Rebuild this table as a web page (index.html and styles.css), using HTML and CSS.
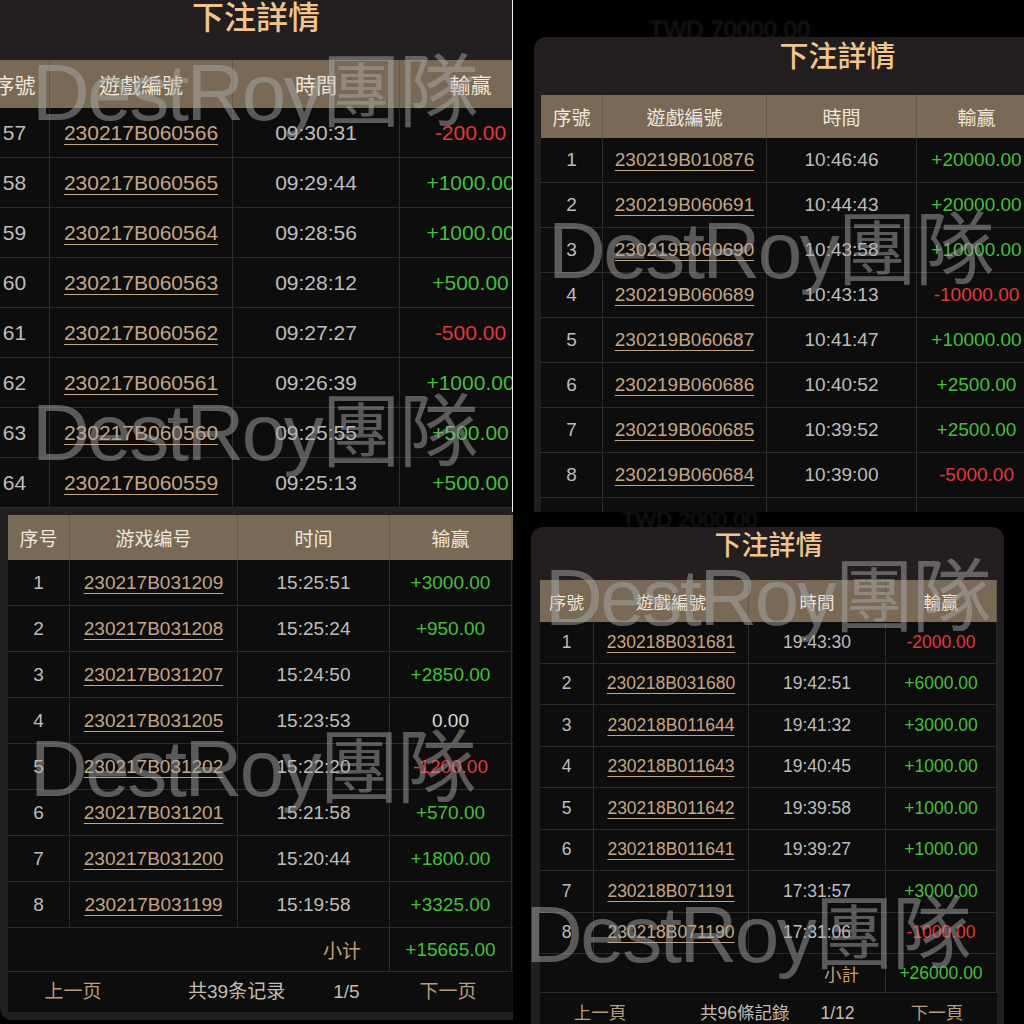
FILE: index.html
```html
<!doctype html>
<html>

<head>
    <meta charset="utf-8">
    <title>下注詳情</title>
    <link rel="stylesheet" href="styles.css">
</head>

<body>
    <div class="collage">

        <!-- 左上 -->
        <div class="shot shot-tl">
            <div class="modal">
                <div class="modal-title">下注詳情</div>
                <div class="bet-table">
                    <div class="bet-row bet-head">
                        <div class="cell">序號</div>
                        <div class="cell">遊戲編號</div>
                        <div class="cell">時間</div>
                        <div class="cell">輸贏</div>
                    </div>
                    <div class="bet-row"><div class="cell">57</div><div class="cell"><a class="game-id" href="#g1">230217B060566</a></div><div class="cell">09:30:31</div><div class="cell lose">-200.00</div></div>
                    <div class="bet-row"><div class="cell">58</div><div class="cell"><a class="game-id" href="#g1">230217B060565</a></div><div class="cell">09:29:44</div><div class="cell win">+1000.00</div></div>
                    <div class="bet-row"><div class="cell">59</div><div class="cell"><a class="game-id" href="#g1">230217B060564</a></div><div class="cell">09:28:56</div><div class="cell win">+1000.00</div></div>
                    <div class="bet-row"><div class="cell">60</div><div class="cell"><a class="game-id" href="#g1">230217B060563</a></div><div class="cell">09:28:12</div><div class="cell win">+500.00</div></div>
                    <div class="bet-row"><div class="cell">61</div><div class="cell"><a class="game-id" href="#g1">230217B060562</a></div><div class="cell">09:27:27</div><div class="cell lose">-500.00</div></div>
                    <div class="bet-row"><div class="cell">62</div><div class="cell"><a class="game-id" href="#g1">230217B060561</a></div><div class="cell">09:26:39</div><div class="cell win">+1000.00</div></div>
                    <div class="bet-row"><div class="cell">63</div><div class="cell"><a class="game-id" href="#g1">230217B060560</a></div><div class="cell">09:25:55</div><div class="cell win">+500.00</div></div>
                    <div class="bet-row"><div class="cell">64</div><div class="cell"><a class="game-id" href="#g1">230217B060559</a></div><div class="cell">09:25:13</div><div class="cell win">+500.00</div></div>
                </div>
            </div>
            <div class="watermark wm-tl1">DestRoy團隊</div>
            <div class="watermark wm-tl2">DestRoy團隊</div>
        </div>

        <!-- 右上 -->
        <div class="shot shot-tr">
            <div class="backdrop"><span class="ghost">TWD 70000.00</span></div>
            <div class="modal">
                <div class="modal-title">下注詳情</div>
                <div class="bet-table">
                    <div class="bet-row bet-head">
                        <div class="cell">序號</div>
                        <div class="cell">遊戲編號</div>
                        <div class="cell">時間</div>
                        <div class="cell">輸贏</div>
                    </div>
                    <div class="bet-row"><div class="cell">1</div><div class="cell"><a class="game-id" href="#g2">230219B010876</a></div><div class="cell">10:46:46</div><div class="cell win">+20000.00</div></div>
                    <div class="bet-row"><div class="cell">2</div><div class="cell"><a class="game-id" href="#g2">230219B060691</a></div><div class="cell">10:44:43</div><div class="cell win">+20000.00</div></div>
                    <div class="bet-row"><div class="cell">3</div><div class="cell"><a class="game-id" href="#g2">230219B060690</a></div><div class="cell">10:43:58</div><div class="cell win">+10000.00</div></div>
                    <div class="bet-row"><div class="cell">4</div><div class="cell"><a class="game-id" href="#g2">230219B060689</a></div><div class="cell">10:43:13</div><div class="cell lose">-10000.00</div></div>
                    <div class="bet-row"><div class="cell">5</div><div class="cell"><a class="game-id" href="#g2">230219B060687</a></div><div class="cell">10:41:47</div><div class="cell win">+10000.00</div></div>
                    <div class="bet-row"><div class="cell">6</div><div class="cell"><a class="game-id" href="#g2">230219B060686</a></div><div class="cell">10:40:52</div><div class="cell win">+2500.00</div></div>
                    <div class="bet-row"><div class="cell">7</div><div class="cell"><a class="game-id" href="#g2">230219B060685</a></div><div class="cell">10:39:52</div><div class="cell win">+2500.00</div></div>
                    <div class="bet-row"><div class="cell">8</div><div class="cell"><a class="game-id" href="#g2">230219B060684</a></div><div class="cell">10:39:00</div><div class="cell lose">-5000.00</div></div>
                    <div class="bet-row"><div class="cell"></div><div class="cell"></div><div class="cell"></div><div class="cell"></div></div>
                </div>
            </div>
            <div class="watermark wm-tr">DestRoy團隊</div>
        </div>

        <!-- 左下 -->
        <div class="shot shot-bl">
            <div class="modal">
                <div class="bet-table">
                    <div class="bet-row bet-head">
                        <div class="cell">序号</div>
                        <div class="cell">游戏编号</div>
                        <div class="cell">时间</div>
                        <div class="cell">输赢</div>
                    </div>
                    <div class="bet-row"><div class="cell">1</div><div class="cell"><a class="game-id" href="#g3">230217B031209</a></div><div class="cell">15:25:51</div><div class="cell win">+3000.00</div></div>
                    <div class="bet-row"><div class="cell">2</div><div class="cell"><a class="game-id" href="#g3">230217B031208</a></div><div class="cell">15:25:24</div><div class="cell win">+950.00</div></div>
                    <div class="bet-row"><div class="cell">3</div><div class="cell"><a class="game-id" href="#g3">230217B031207</a></div><div class="cell">15:24:50</div><div class="cell win">+2850.00</div></div>
                    <div class="bet-row"><div class="cell">4</div><div class="cell"><a class="game-id" href="#g3">230217B031205</a></div><div class="cell">15:23:53</div><div class="cell even">0.00</div></div>
                    <div class="bet-row"><div class="cell">5</div><div class="cell"><a class="game-id" href="#g3">230217B031202</a></div><div class="cell">15:22:20</div><div class="cell lose">-1200.00</div></div>
                    <div class="bet-row"><div class="cell">6</div><div class="cell"><a class="game-id" href="#g3">230217B031201</a></div><div class="cell">15:21:58</div><div class="cell win">+570.00</div></div>
                    <div class="bet-row"><div class="cell">7</div><div class="cell"><a class="game-id" href="#g3">230217B031200</a></div><div class="cell">15:20:44</div><div class="cell win">+1800.00</div></div>
                    <div class="bet-row"><div class="cell">8</div><div class="cell"><a class="game-id" href="#g3">230217B031199</a></div><div class="cell">15:19:58</div><div class="cell win">+3325.00</div></div>
                    <div class="bet-row subtotal"><div class="cell label">小计</div><div class="cell win">+15665.00</div></div>
                    <div class="pager">
                        <span class="pg-side">上一页</span>
                        <span class="pg-info"><span>共39条记录</span><span>1/5</span></span>
                        <span class="pg-side">下一页</span>
                    </div>
                </div>
            </div>
            <div class="watermark wm-bl">DestRoy團隊</div>
        </div>

        <!-- 右下 -->
        <div class="shot shot-br">
            <div class="backdrop"><span class="ghost">TWD 2000.00</span></div>
            <div class="modal">
                <div class="modal-title">下注詳情</div>
                <div class="bet-table">
                    <div class="bet-row bet-head">
                        <div class="cell">序號</div>
                        <div class="cell">遊戲編號</div>
                        <div class="cell">時間</div>
                        <div class="cell">輸贏</div>
                    </div>
                    <div class="bet-row"><div class="cell">1</div><div class="cell"><a class="game-id" href="#g4">230218B031681</a></div><div class="cell">19:43:30</div><div class="cell lose">-2000.00</div></div>
                    <div class="bet-row"><div class="cell">2</div><div class="cell"><a class="game-id" href="#g4">230218B031680</a></div><div class="cell">19:42:51</div><div class="cell win">+6000.00</div></div>
                    <div class="bet-row"><div class="cell">3</div><div class="cell"><a class="game-id" href="#g4">230218B011644</a></div><div class="cell">19:41:32</div><div class="cell win">+3000.00</div></div>
                    <div class="bet-row"><div class="cell">4</div><div class="cell"><a class="game-id" href="#g4">230218B011643</a></div><div class="cell">19:40:45</div><div class="cell win">+1000.00</div></div>
                    <div class="bet-row"><div class="cell">5</div><div class="cell"><a class="game-id" href="#g4">230218B011642</a></div><div class="cell">19:39:58</div><div class="cell win">+1000.00</div></div>
                    <div class="bet-row"><div class="cell">6</div><div class="cell"><a class="game-id" href="#g4">230218B011641</a></div><div class="cell">19:39:27</div><div class="cell win">+1000.00</div></div>
                    <div class="bet-row"><div class="cell">7</div><div class="cell"><a class="game-id" href="#g4">230218B071191</a></div><div class="cell">17:31:57</div><div class="cell win">+3000.00</div></div>
                    <div class="bet-row"><div class="cell">8</div><div class="cell"><a class="game-id" href="#g4">230218B071190</a></div><div class="cell">17:31:06</div><div class="cell lose">-1000.00</div></div>
                    <div class="bet-row subtotal"><div class="cell label">小計</div><div class="cell win">+26000.00</div></div>
                    <div class="pager">
                        <span class="pg-side">上一頁</span>
                        <span class="pg-info"><span>共96條記錄</span><span>1/12</span></span>
                        <span class="pg-side">下一頁</span>
                    </div>
                </div>
            </div>
            <div class="watermark wm-br1">DestRoy團隊</div>
            <div class="watermark wm-br2">DestRoy團隊</div>
        </div>

    </div>
</body>

</html>
```

FILE: styles.css
```css
* {
    box-sizing: border-box;
}

body {
    margin: 0;
    background: #000;
    font-family: "Liberation Sans", "Noto Sans CJK TC", sans-serif;
}

.collage {
    display: grid;
    grid-template-columns: 513px 511px;
    grid-template-rows: 512px 512px;
    width: 1024px;
    height: 1024px;
    overflow: hidden;
}

.shot {
    position: relative;
    overflow: hidden;
    background: #000;
}

/* 弹窗 */
.modal {
    background: #231f20;
}

.modal-title {
    text-align: center;
    color: #f0c68e;
    font-weight: 500;
}

/* 表格 */
.bet-row {
    display: grid;
    grid-template-columns: var(--cols);
    height: var(--row-h);
    background: #0e0d0d;
    border-bottom: 1px solid #2e2b2b;
}

.cell {
    display: flex;
    align-items: center;
    justify-content: center;
    white-space: nowrap;
    color: #bdbdbd;
    border-right: 1px solid #2e2b2b;
}

.bet-head {
    height: var(--head-h);
    background: #786a56;
    border-bottom: none;
}

.bet-head .cell {
    color: #efe7dc;
    border-right-color: #66594a;
}

.game-id {
    color: #c4a585;
    text-decoration: underline;
    text-decoration-thickness: 1px;
    text-underline-offset: 4px;
}

.win {
    color: #45bf3b;
}

.lose {
    color: #e0393b;
}

.even {
    color: #d8d8d8;
}

.subtotal .label {
    grid-column: 1 / 4;
    justify-content: flex-end;
    color: #c9a073;
}

.pager {
    display: grid;
    grid-template-columns: var(--pg-side) 1fr var(--pg-side);
    align-items: center;
    background: #0e0d0d;
    white-space: nowrap;
    line-height: 24px;
}

.pg-side {
    text-align: center;
    color: #b99c7e;
}

.pg-info {
    display: flex;
    align-items: center;
    color: #c4bcb4;
}

/* 背景里模糊的内容 */
.backdrop {
    overflow: hidden;
    white-space: nowrap;
}

.ghost {
    color: #1f1d1d;
    filter: blur(1px);
}

/* 水印 */
.watermark {
    position: absolute;
    font-size: 80px;
    line-height: 1;
    letter-spacing: -2.5px;
    color: rgba(168, 168, 168, 0.5);
    white-space: nowrap;
    pointer-events: none;
}

/* 左上 */
.shot-tl {
    --cols: 70px 183px 167px 142px;
    --row-h: 50px;
    --head-h: 48px;
    font-size: 21px;
    background: #231f20;
    border-right: 1px solid #f2f2f2;
}

.shot-tl .modal-title {
    height: 60px;
    font-size: 32px;
    line-height: 36px;
}

.shot-tl .bet-table {
    width: 562px;
    margin-left: -20px;
}

.wm-tl1 {
    left: 32px;
    top: 53px;
}

.wm-tl2 {
    left: 32px;
    top: 393px;
}

/* 右上 */
.shot-tr {
    --cols: 62px 164px 150px 120px;
    --row-h: 45px;
    --head-h: 43px;
    font-size: 19px;
}

.shot-tr .backdrop {
    height: 37px;
    padding: 18px 0 0 136px;
    font-size: 24px;
    line-height: 24px;
}

.shot-tr .modal {
    width: 600px;
    margin-left: 21px;
    padding-left: 7px;
    border-radius: 12px 0 0 0;
}

.shot-tr .modal-title {
    height: 58px;
    font-size: 29px;
    line-height: 40px;
}

.wm-tr {
    left: 35px;
    top: 211px;
}

/* 左下 */
.shot-bl {
    --cols: 62px 168px 152px 122px;
    --row-h: 46px;
    --head-h: 45px;
    --pg-side: 130px;
    font-family: "Liberation Sans", "Noto Sans CJK SC", sans-serif;
    font-size: 19px;
}

.shot-bl .modal {
    height: 508px;
    padding: 3px 0 0 8px;
    border-radius: 0 0 0 12px;
}

.shot-bl .subtotal {
    height: 44px;
}

.shot-bl .subtotal .label {
    padding-right: 28px;
}

.shot-bl .pager {
    height: 40px;
}

.shot-bl .pg-info {
    padding-left: 50px;
    gap: 48px;
}

.wm-bl {
    left: 30px;
    top: 217px;
}

/* 右下 */
.shot-br {
    --cols: 54px 155px 137px 111px;
    --row-h: 41.5px;
    --head-h: 42px;
    --pg-side: 120px;
    font-size: 17.5px;
}

.shot-br .backdrop {
    height: 15px;
    padding-left: 109px;
    font-size: 22px;
    line-height: 15px;
}

.shot-br .modal {
    width: 473px;
    height: 520px;
    margin-left: 18px;
    padding: 0 7px 0 9px;
    border-radius: 12px 12px 0 0;
}

.shot-br .modal-title {
    height: 53px;
    font-size: 27px;
    line-height: 38px;
}

.shot-br .subtotal {
    height: 39px;
}

.shot-br .subtotal .label {
    padding-right: 26px;
}

.shot-br .pager {
    height: 40px;
}

.shot-br .pg-info {
    padding-left: 40px;
    gap: 31px;
}

.wm-br1 {
    left: 32px;
    top: 46px;
}

.wm-br2 {
    left: 12px;
    top: 383px;
}
```
